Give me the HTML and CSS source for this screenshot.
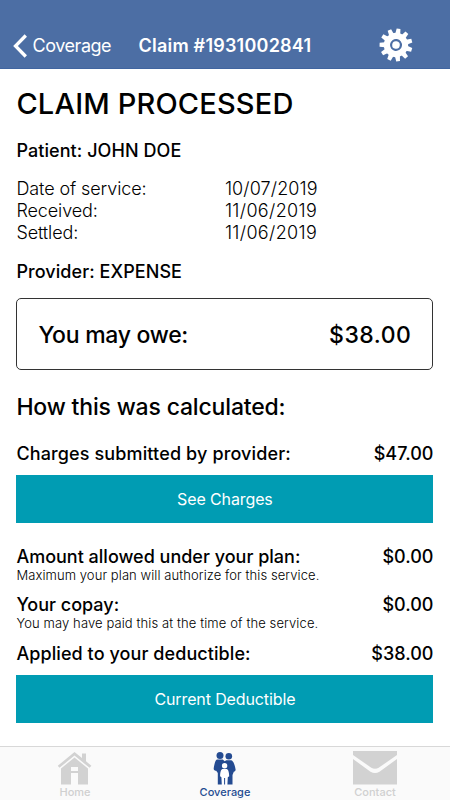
FILE: index.html
```
<!DOCTYPE html>
<html lang="en">
<head>
<meta charset="utf-8">
<title>Claim #1931002841</title>
<link rel="stylesheet" href="styles.css">
</head>
<body>
<header class="navbar">
  <a class="back">
    <svg class="chevron" width="14" height="24" viewBox="0 0 14 24"><path d="M12.8 1.5 L2.5 12 L12.8 22.5" fill="none" stroke="#fff" stroke-width="3.3"/></svg>
    <span class="back-label">Coverage</span>
  </a>
  <h1 class="nav-title">Claim #1931002841</h1>
  <svg class="gear" width="34" height="34" viewBox="-17 -17 34 34">
    <defs><path id="tooth" d="M-2.5 -11 L-1.9 -16.4 H1.9 L2.5 -11 Z"/></defs>
    <g fill="#fff" transform="rotate(9)">
      <circle r="9.1" fill="none" stroke="#fff" stroke-width="6.2"/>
      <use href="#tooth"/><use href="#tooth" transform="rotate(32.73)"/><use href="#tooth" transform="rotate(65.45)"/><use href="#tooth" transform="rotate(98.18)"/><use href="#tooth" transform="rotate(130.9)"/><use href="#tooth" transform="rotate(163.64)"/><use href="#tooth" transform="rotate(196.36)"/><use href="#tooth" transform="rotate(229.09)"/><use href="#tooth" transform="rotate(261.82)"/><use href="#tooth" transform="rotate(294.55)"/><use href="#tooth" transform="rotate(327.27)"/>
      <circle r="3.8"/>
    </g>
  </svg>
</header>
<main class="content">
  <h2 class="status">CLAIM PROCESSED</h2>
  <p class="strong patient">Patient: JOHN DOE</p>
  <dl class="dates">
    <dt>Date of service:</dt><dd class="first-date">10/07/2019</dd>
    <dt>Received:</dt><dd>11/06/2019</dd>
    <dt>Settled:</dt><dd>11/06/2019</dd>
  </dl>
  <p class="strong provider">Provider: EXPENSE</p>
  <section class="owe"><span class="owe-label">You may owe:</span><span class="owe-amount">$38.00</span></section>
  <h3 class="how">How this was calculated:</h3>
  <div class="row"><span class="charges">Charges submitted by provider:</span><span>$47.00</span></div>
  <button class="action">See Charges</button>
  <div class="row allowed"><span>Amount allowed under your plan:</span><span>$0.00</span></div>
  <p class="note">Maximum your plan will authorize for this service.</p>
  <div class="row copay"><span>Your copay:</span><span>$0.00</span></div>
  <p class="note second">You may have paid this at the time of the service.</p>
  <div class="row applied"><span class="applied-label">Applied to your deductible:</span><span>$38.00</span></div>
  <button class="action deductible">Current Deductible</button>
</main>
<nav class="tabs">
  <a class="tab">
    <svg width="36" height="35" viewBox="0 0 36 35" fill="#d2d2d2"><path d="M17.5 1 L.8 14.8 L2.4 16.8 L17.5 4.6 L32.6 16.8 L34.4 14.8 L29 10.3 V2.5 H25 V7 Z"/><path fill-rule="evenodd" d="M17.5 6.5 L4 17.5 V33.5 H14 V22 H21 V33.5 H31 V17.5 Z M14 16 H21 V20 H14 Z"/></svg>
    <span>Home</span>
  </a>
  <a class="tab active">
    <svg width="26" height="35" viewBox="0 0 26 35">
      <g fill="#244b91"><circle cx="8" cy="4.5" r="3.5"/><circle cx="16.8" cy="5.3" r="3.3"/>
      <path d="M5 8.6 H10.8 L12.6 10.2 L14.4 9.3 H19 C21.4 9.6 22.8 14 23.5 18 C23.9 19.5 23 20.3 21.8 20.8 L20.5 24 V33.5 H5.8 V22 L4.2 19.8 C3 19.8 1.5 19 1.7 17.5 C2.2 14 3 9.5 5 8.6 Z"/></g>
      <g fill="#fff"><circle cx="12.6" cy="14.8" r="2.7"/><path d="M10.3 18 H14.9 C16.6 18.7 17.1 22 17.2 25.2 L15.8 26.3 L15.4 34 H13.1 V27 H12.1 V34 H9.8 L9.4 26.3 L8.1 25.2 C8.2 22 8.6 18.7 10.3 18 Z"/></g>
    </svg>
    <span>Coverage</span>
  </a>
  <a class="tab">
    <svg width="46" height="35" viewBox="0 0 46 35" fill="#d2d2d2"><path d="M1 0 H45 V4 L27 16.5 Q23 19 19 16.5 L1 4 Z"/><path d="M1 8 L18.5 20.7 Q23 23.5 27.5 20.7 L45 8 V33.5 H1 Z"/></svg>
    <span>Contact</span>
  </a>
</nav>
</body>
</html>
```
FILE: styles.css
```
* { box-sizing: border-box; }
body { margin: 0; height: 800px; display: flex; flex-direction: column; background: #fff; color: #000; font-family: Inter, "Liberation Sans", sans-serif; overflow: hidden; }
h1, h2, h3, p, dl, dd { margin: 0; font-weight: 500; white-space: nowrap; }
.navbar { height: 69px; flex: none; display: flex; align-items: flex-start; background: #4c6ea4; color: #fff; border-bottom: 1px solid #4065a0; }
.back { display: flex; width: 138.5px; padding-left: 13px; }
.chevron { margin-top: 34px; }
.back-label { margin: 35px 0 0 5.5px; font-size: 18px; line-height: 22px; font-weight: 400; letter-spacing: -.45px; }
.nav-title { width: 240px; margin-top: 35px; font-size: 18px; line-height: 22px; font-weight: 600; letter-spacing: .22px; }
.gear { margin: 28px 0 0; }
.content { flex: none; height: 677px; padding: 17px 16.6px 0 16.4px; }
.status { font-size: 29px; line-height: 36px; letter-spacing: .17px; }
.strong { font-size: 18px; line-height: 22px; letter-spacing: .07px; }
.patient { margin-top: 18px; }
.dates { display: grid; grid-template-columns: 208.5px 1fr; margin-top: 16px; font-size: 18px; line-height: 22px; }
.dates dt { font-weight: 300; letter-spacing: -.1px; }
.dates dd { font-weight: 300; letter-spacing: .35px; }
.dates .first-date { letter-spacing: .12px; }
.provider { margin-top: 17px; }
.owe { display: flex; justify-content: space-between; align-items: center; height: 72px; margin-top: 15px; padding: 2px 21px 0; border: 1px solid #333; border-radius: 5px; font-size: 23px; font-weight: 500; }
.owe-label { letter-spacing: -.28px; }
.owe-amount { letter-spacing: .5px; }
.how { margin-top: 22px; font-size: 23px; line-height: 30px; letter-spacing: -.17px; }
.row { display: flex; justify-content: space-between; margin-top: 21px; font-size: 18px; line-height: 22px; font-weight: 500; white-space: nowrap; }
.charges { letter-spacing: .13px; }
.action { display: block; width: 100%; height: 48px; margin-top: 10px; padding: 0; border: 0; background: #009cb3; color: #fff; font: 400 16px/48px Inter, "Liberation Sans", sans-serif; letter-spacing: -.12px; }
.allowed { margin-top: 23px; }
.note { margin-top: -1px; font-size: 13px; line-height: 16px; font-weight: 300; letter-spacing: .08px; }
.second { letter-spacing: .11px; }
.copay { margin-top: 11px; }
.applied { margin-top: 12px; }
.applied-label { letter-spacing: .08px; }
.deductible { margin-top: 10px; }
.tabs { flex: none; height: 54px; display: grid; grid-template-columns: repeat(3, 150px); border-top: 1px solid #d8d8d8; background: #fafafa; }
.tab { display: flex; flex-direction: column; align-items: center; padding-top: 4px; color: #d0d0d0; font-size: 11px; line-height: 12px; font-weight: 500; }
.active { color: #244b91; }
```
